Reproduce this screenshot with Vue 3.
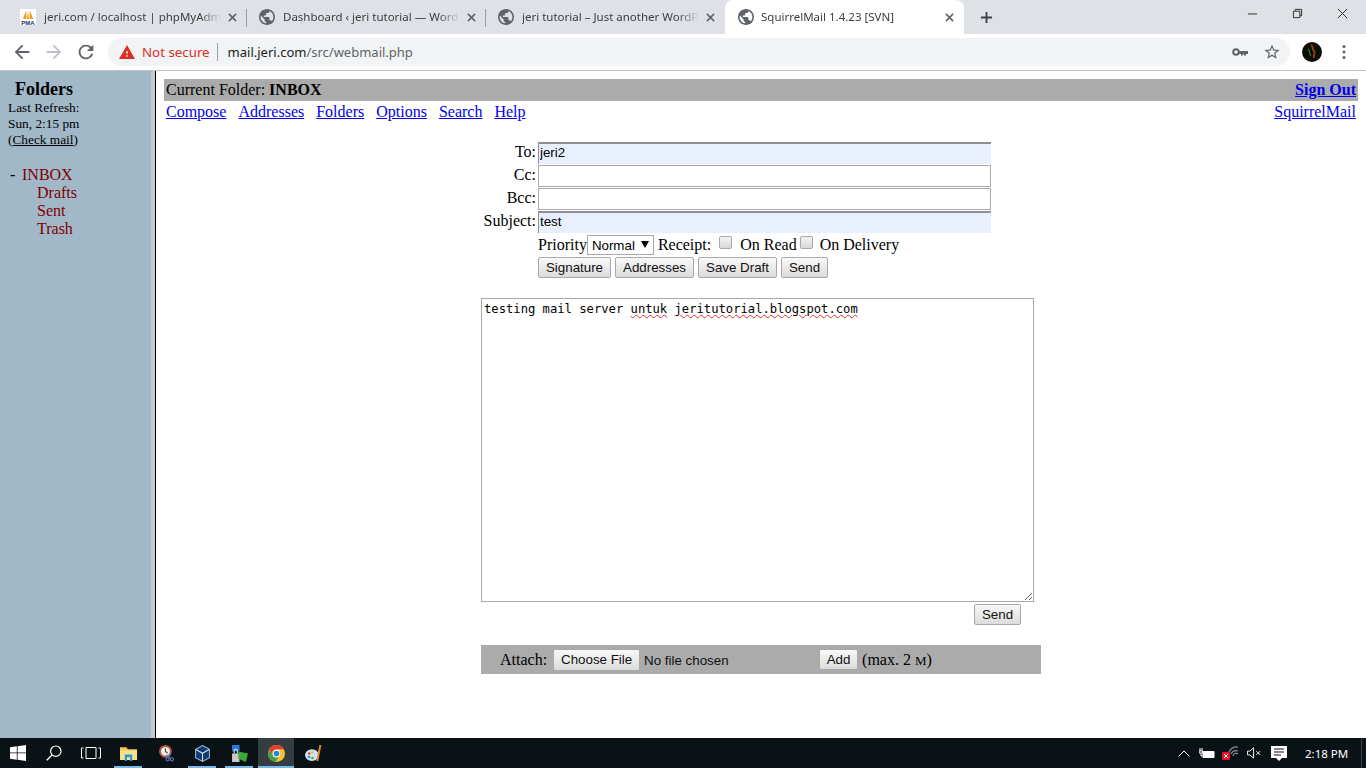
<script setup>
const tabs = [
  { title: 'jeri.com / localhost | phpMyAdmin', pma: true },
  { title: 'Dashboard ‹ jeri tutorial — WordPress' },
  { title: 'jeri tutorial – Just another WordPress site' },
  { title: 'SquirrelMail 1.4.23 [SVN]', active: true }
]
const navLinks = ['Compose', 'Addresses', 'Folders', 'Options', 'Search', 'Help']
const fields = [
  { label: 'To:', value: 'jeri2', filled: true },
  { label: 'Cc:', value: '' },
  { label: 'Bcc:', value: '' },
  { label: 'Subject:', value: 'test', filled: true }
]
const folders = ['Drafts', 'Sent', 'Trash']
const actions = [
  { text: 'Signature', w: 73 },
  { text: 'Addresses', w: 79 },
  { text: 'Save Draft', w: 79 },
  { text: 'Send', w: 47 }
]
const globe = 'M12 2C6.48 2 2 6.48 2 12s4.48 10 10 10 10-4.48 10-10S17.52 2 12 2zm-1 17.93c-3.95-.49-7-3.85-7-7.93 0-.62.08-1.21.21-1.79L9 15v1c0 1.1.9 2 2 2v1.93zm6.9-2.54c-.26-.81-1-1.39-1.9-1.39h-1v-3c0-.55-.45-1-1-1H8v-2h2c.55 0 1-.45 1-1V7h2c1.1 0 2-.9 2-2v-.41c2.93 1.19 5 4.06 5 7.41 0 2.08-.8 3.97-2.1 5.39z'
</script>

<template>
  <div class="screen">
    <header class="tabstrip">
      <div v-for="(t, i) in tabs" :key="i" class="tab" :class="{ active: t.active, sep: i < 2 }">
        <svg v-if="t.pma" class="fav" viewBox="0 0 16 16">
          <rect width="16" height="16" fill="#fff" />
          <path d="M3 10 6 1.5 6.6 10zM7 10 8 1 9 10zM9.6 10 10 1.5 13 10z" fill="#f59a12" />
          <text x="8" y="15.5" text-anchor="middle" font-size="6" font-weight="700" font-family="Liberation Sans, sans-serif" fill="#1c2f6b">PMA</text>
        </svg>
        <svg v-else class="fav" viewBox="2 2 20 20"><path :d="globe" fill="#5f6368" /></svg>
        <span class="tab-title">{{ t.title }}</span>
        <svg class="tab-x" viewBox="0 0 10 10"><path d="M1 1 9 9M9 1 1 9" stroke="#5f6368" stroke-width="1.7" /></svg>
      </div>
      <svg class="plus" viewBox="0 0 14 14"><path d="M7 1v12M1 7h12" stroke="#3c4043" stroke-width="2" /></svg>
      <div class="win-ctrls">
        <svg viewBox="0 0 12 12"><path d="M1 6.5h10" stroke="#222" /></svg>
        <svg viewBox="0 0 12 12"><path d="M3.5 3V1.5h7v7H8.5M1.5 3.5h7v7h-7z" fill="none" stroke="#222" /></svg>
        <svg viewBox="0 0 12 12"><path d="M1 1l10 10M11 1 1 11" stroke="#222" /></svg>
      </div>
    </header>

    <div class="toolbar">
      <svg class="tool" viewBox="0 0 24 24"><path d="M20 11H7.83l5.59-5.59L12 4l-8 8 8 8 1.41-1.41L7.83 13H20v-2z" fill="#5f6368" /></svg>
      <svg class="tool" viewBox="0 0 24 24"><path d="M4 11h12.17l-5.59-5.59L12 4l8 8-8 8-1.41-1.41L16.17 13H4v-2z" fill="#bdc1c6" /></svg>
      <svg class="tool" viewBox="0 0 24 24"><path d="M17.65 6.35A7.958 7.958 0 0012 4c-4.42 0-7.99 3.58-7.99 8s3.57 8 7.99 8c3.73 0 6.84-2.55 7.73-6h-2.08A5.99 5.99 0 0112 18c-3.31 0-6-2.69-6-6s2.69-6 6-6c1.66 0 3.14.69 4.22 1.78L13 11h7V4l-2.35 2.35z" fill="#5f6368" /></svg>
      <div class="omnibox">
        <svg class="warn" viewBox="1 2 22 19"><path d="M1 21h22L12 2 1 21zm12-3h-2v-2h2v2zm0-4h-2v-4h2v4z" fill="#d93025" /></svg>
        <span class="not-secure">Not secure</span>
        <i class="omni-sep"></i>
        <span class="url"><b>mail.jeri.com</b>/src/webmail.php</span>
        <svg class="key" viewBox="0 0 16 10"><circle cx="4" cy="5" r="2.8" fill="none" stroke="#5f6368" stroke-width="2" /><path d="M7 4h9v3h-2v1.5h-2V7h-1v1.500H9V7H7z" fill="#5f6368" /></svg>
        <svg class="star" viewBox="0 0 24 24"><path d="M22 9.24l-7.19-.62L12 2 9.19 8.63 2 9.24l5.46 4.730L5.820 21 12 17.270 18.180 21l-1.630-7.030L22 9.240zM12 15.400l-3.760 2.270 1-4.280-3.320-2.880 4.380-.38L12 6.100l1.710 4.040 4.380.38-3.320 2.880 1 4.280L12 15.400z" fill="#5f6368" /></svg>
      </div>
      <svg class="avatar" viewBox="0 0 20 20">
        <circle cx="10" cy="10" r="10" fill="#0c0d08" />
        <path d="M9 3c3 2 1 4 3 6s-1 4 0 7" fill="none" stroke="#8c4218" stroke-width="2" />
        <path d="M6 7c2 1 1 5 3 7" fill="none" stroke="#2f6a25" stroke-width="1.500" />
      </svg>
      <svg class="dots" viewBox="0 0 4 16"><circle cx="2" cy="2.500" r="1.500" /><circle cx="2" cy="8" r="1.500" /><circle cx="2" cy="13.500" r="1.500" /></svg>
    </div>

    <div class="page">
      <aside class="sidebar">
        <div class="side-title">Folders</div>
        <div class="side-info">
          <div>Last Refresh:</div>
          <div>Sun, 2:15 pm</div>
          <div>(<a class="check">Check mail</a>)</div>
        </div>
        <div class="inbox"><span class="dash">-</span><a>INBOX</a></div>
        <a v-for="f in folders" :key="f" class="folder">{{ f }}</a>
      </aside>

      <main class="main">
        <div class="topbar">
          <span>Current Folder: <b>INBOX</b></span>
          <a class="link signout">Sign Out</a>
        </div>
        <nav class="nav">
          <a v-for="n in navLinks" :key="n" class="link">{{ n }}</a>
          <a class="link brand">SquirrelMail</a>
        </nav>

        <section class="compose">
          <div class="fields">
            <template v-for="f in fields" :key="f.label">
              <label class="f-label">{{ f.label }}</label>
              <input class="f-input" :class="{ filled: f.filled }" :value="f.value" />
            </template>
          </div>

          <div class="options">
            <span>Priority</span>
            <div class="select-wrap">
              <select class="select"><option>Normal</option></select>
              <svg class="select-arrow" viewBox="0 0 8 7"><path d="M0 0h8L4 7z" /></svg>
            </div>
            <span class="receipt">Receipt:</span>
            <input class="check-box first" type="checkbox" />
            <span class="on-read">On Read</span>
            <input class="check-box second" type="checkbox" />
            <span class="on-delivery">On Delivery</span>
          </div>

          <div class="actions">
            <button v-for="a in actions" :key="a.text" class="btn" :style="{ width: a.w + 'px' }">{{ a.text }}</button>
          </div>

          <div class="body-box">testing mail server <span class="squiggle">untuk</span> <span class="squiggle">jeritutorial.blogspot.com</span></div>

          <div class="send-row"><button class="btn send">Send</button></div>

          <div class="attach">
            <span class="attach-label">Attach:</span>
            <input class="file" type="file" />
            <button class="btn add">Add</button>
            <span class="max">(max. 2 <small>M</small>)</span>
          </div>
        </section>
      </main>
    </div>

    <footer class="taskbar">
      <div class="slot start">
        <svg class="ico" viewBox="0 0 16 16"><path d="M0 2.300 6.800 1.300V7.500H0zM7.600 1.200 16 0V7.500H7.600zM0 8.300H6.800V14.700L0 13.700zM7.600 8.300H16V16L7.600 14.800z" fill="#fff" /></svg>
      </div>
      <div class="slot">
        <svg class="ico" viewBox="0 0 16 16"><circle cx="9.800" cy="6.200" r="5.200" fill="none" stroke="#fff" stroke-width="1.200" /><path d="M6 10 .8 15.300" stroke="#fff" stroke-width="1.300" /></svg>
      </div>
      <div class="slot">
        <svg class="ico wide" viewBox="0 0 20 12"><path d="M5 .500h10v11H5zM2.500 1H.5v10h2M17.500 1h2v10h-2" fill="none" stroke="#fff" /></svg>
      </div>
      <div class="slot apps run">
        <svg class="ico" viewBox="0 0 16 14"><path d="M0 1h6l1.500 2H16v10H0z" fill="#f5c64e" /><path d="M0 4h16v9H0z" fill="#fbe08c" /><path d="M4.500 8h7v6h-2V10.500h-3V14h-2z" fill="#2a9ad6" /></svg>
      </div>
      <div class="slot apps">
        <svg class="ico" viewBox="0 0 16 16"><circle cx="7" cy="6" r="6" fill="#b5513f" /><circle cx="7" cy="6" r="4.200" fill="#eee" /><path d="M7 3v3l2 1.500" stroke="#444" fill="none" /><path d="M8 9l3 3M12 8l-3 4" stroke="#5b7fc0" /><circle cx="9" cy="13.500" r="1.500" fill="none" stroke="#5b7fc0" /><circle cx="13" cy="13.500" r="1.500" fill="none" stroke="#5b7fc0" /></svg>
      </div>
      <div class="slot apps run tight">
        <svg class="ico" viewBox="0 0 16 16"><path d="M8 .500 14.500 4v8L8 15.500 1.500 12V4z" fill="#123a6b" stroke="#8fb4dc" /><path d="M1.800 4.200 8 7.800l6.200-3.600M8 7.800V15" stroke="#cfe0f2" fill="none" /></svg>
      </div>
      <div class="slot apps run">
        <svg class="ico" viewBox="0 0 16 16"><path d="M1 0h7v6H1z" fill="#2b79d8" /><path d="M1 8h7v8H1z" fill="#c9c9c9" /><path d="M3 8V5.500a1.500 1.500 0 0 1 3 0V8" fill="none" stroke="#ddd" /><path d="M7 6l9 2-2 8-7-3z" fill="#3aa83a" /></svg>
      </div>
      <div class="slot apps run active">
        <svg class="ico" viewBox="0 0 16 16">
          <circle cx="8" cy="8" r="8" fill="#fbc02d" />
          <path d="M8 0a8 8 0 0 0-6.900 4l3.400 6A4 4 0 0 1 8 4h7a8 8 0 0 0-7-4z" fill="#e53935" />
          <path d="M1.100 4A8 8 0 0 0 7 15.900L10.500 11A4 4 0 0 1 4.500 10z" fill="#43a047" />
          <circle cx="8" cy="8" r="3.500" fill="#fff" /><circle cx="8" cy="8" r="2.700" fill="#1e88e5" />
        </svg>
      </div>
      <div class="slot apps">
        <svg class="ico" viewBox="0 0 16 16"><ellipse cx="6.500" cy="9.500" rx="6.500" ry="5.500" fill="#cfe3ef" /><circle cx="4" cy="8" r="1.200" fill="#e0483e" /><circle cx="7" cy="6.800" r="1.200" fill="#f2c230" /><circle cx="3.800" cy="11.300" r="1.200" fill="#3a8edb" /><circle cx="7" cy="12.300" r="1.200" fill="#3cae4a" /><path d="M14.500 0 11.500 15" stroke="#e8862e" stroke-width="1.800" /></svg>
      </div>

      <div class="tray">
        <svg class="t chevron" viewBox="0 0 12 7"><path d="M.5 6.500 6 1l5.500 5.500" fill="none" stroke="#fff" /></svg>
        <svg class="t batt" viewBox="0 0 16 11"><path d="M4 3.500h11v6H4z" fill="#fff" stroke="#fff" /><path d="M1 0v3M3 0v3M0 3h4v2H0zM2 5v3h2" stroke="#fff" fill="none" /></svg>
        <svg class="t net" viewBox="0 0 16 14"><path d="M7 6a9 9 0 0 1 9-5M9 8a6 6 0 0 1 7-3M11 10a3 3 0 0 1 5-2" fill="none" stroke="#8b8f91" stroke-width="1.200" /><rect x="0" y="6" width="8" height="8" rx="1" fill="#e81123" /><path d="M2 8l4 4M6 8l-4 4" stroke="#fff" /></svg>
        <svg class="t vol" viewBox="0 0 16 12"><path d="M.5 4H3l4-3.500v11L3 8H.5z" fill="none" stroke="#fff" /><path d="M10 4l4 4M14 4l-4 4" stroke="#fff" /></svg>
        <svg class="t note" viewBox="0 0 16 15"><path d="M0 0h16v12h-5l-3 3-3-3H0z" fill="#fff" /><path d="M3 3h10M3 6h10M3 9h7" stroke="#0a1216" /></svg>
        <span class="clock">2:18 PM</span>
        <i class="show-desk"></i>
      </div>
    </footer>
  </div>
</template>

<style>
html, body { margin: 0; overflow: hidden; }
</style>

<style scoped>
.screen {
  width: 1366px;
  height: 768px;
  display: flex;
  flex-direction: column;
  overflow: hidden;
  background: #fff;
  font-family: "Liberation Serif", serif;
  font-size: 16px;
  color: #000;
}

/* tab strip */
.tabstrip {
  height: 34px;
  flex: none;
  display: flex;
  padding-left: 8px;
  background: #dee1e6;
  font-family: "Noto Sans", sans-serif;
}
.tab {
  width: 239px;
  height: 34px;
  box-sizing: border-box;
  flex: none;
  display: flex;
  align-items: center;
  padding: 0 10px 0 12px;
  position: relative;
  color: #3c4043;
}
.tab.sep::after {
  content: "";
  position: absolute;
  right: 0;
  top: 9px;
  height: 18px;
  width: 1px;
  background: #9aa0a6;
}
.tab.active {
  background: #fff;
  border-radius: 8px 8px 0 0;
  padding-left: 13px;
}
.tab.active .tab-title { margin-left: 7px; }
.fav { width: 16px; height: 16px; flex: none; }
.tab-title {
  flex: 1;
  min-width: 0;
  margin-left: 8px;
  font-size: 11.5px;
  line-height: 16px;
  white-space: nowrap;
  overflow: hidden;
  -webkit-mask-image: linear-gradient(to right, #000 88%, transparent 100%);
  mask-image: linear-gradient(to right, #000 88%, transparent 100%);
}
.tab-x { width: 9px; height: 9px; flex: none; margin-left: 7px; }
.plus { width: 13px; height: 13px; flex: none; margin: 11px 0 0 16px; }
.win-ctrls {
  margin-left: auto;
  display: flex;
  gap: 34px;
  padding: 8px 18px 0 0;
}
.win-ctrls svg { width: 11px; height: 11px; }

/* toolbar */
.toolbar {
  height: 36px;
  flex: none;
  display: flex;
  align-items: center;
  background: #fff;
  padding-left: 11px;
  font-family: "Noto Sans", sans-serif;
}
.tool { width: 22px; height: 22px; flex: none; margin-right: 10px; }
.omnibox {
  width: 1182px;
  height: 28px;
  margin-left: 1px;
  box-sizing: border-box;
  flex: none;
  display: flex;
  align-items: center;
  padding: 0 8px 0 11px;
  border-radius: 14px;
  background: #f1f3f4;
  font-size: 13px;
}
.warn { width: 16px; height: 14px; flex: none; }
.not-secure { margin-left: 7px; color: #d93025; font-size: 13.3px; }
.omni-sep { width: 1px; height: 18px; margin: 0 10px 0 7px; background: #9aa0a6; }
.url { color: #5f6368; }
.url b { font-weight: 400; color: #202124; }
.key { width: 16px; height: 10px; margin-left: auto; }
.star { width: 18px; height: 18px; margin-left: 15px; margin-right: 1px; }
.avatar { width: 20px; height: 20px; flex: none; margin-left: 12px; }
.dots { width: 4px; height: 16px; flex: none; margin-left: 20px; fill: #5f6368; }

/* page */
.page {
  flex: 1;
  min-height: 0;
  display: flex;
  border-top: 1px solid #c4c4c4;
}
.sidebar {
  width: 151px;
  flex: none;
  box-sizing: content-box;
  background: #a0b8c8;
  border-right: 4px solid #c8c8c8;
  box-shadow: 1px 0 0 #000;
  display: flex;
  flex-direction: column;
  align-items: flex-start;
  margin-right: 1px;
}
.side-title {
  margin: 8px 0 0 15px;
  font-size: 18px;
  line-height: 20px;
  font-weight: 700;
}
.side-info {
  margin: 1px 0 0 8px;
  font-size: 13.33px;
  line-height: 16px;
}
.check { color: #000; text-decoration: underline; }
.inbox {
  margin: 18px 0 0 10px;
  line-height: 18px;
  display: flex;
}
.dash { width: 12px; }
.inbox a, .folder { color: #800000; }
.folder { margin-left: 37px; line-height: 18px; }

.main {
  flex: 1;
  min-width: 0;
  padding: 8px;
  display: flex;
  flex-direction: column;
  align-items: stretch;
}
.topbar {
  height: 22px;
  flex: none;
  display: flex;
  justify-content: space-between;
  align-items: center;
  padding: 0 2px;
  background: #ababab;
}
.link { color: #0000ee; text-decoration: underline; }
.signout { font-weight: 700; }
.nav {
  height: 22px;
  flex: none;
  display: flex;
  gap: 12px;
  align-items: center;
  padding: 0 2px;
}
.brand { margin-left: auto; }

.compose {
  width: 560px;
  align-self: center;
  margin-top: 19px;
  display: flex;
  flex-direction: column;
}
.fields {
  display: grid;
  grid-template-columns: 57px 453px;
  grid-auto-rows: 23px;
}
.f-label {
  padding-right: 2px;
  text-align: right;
  line-height: 19px;
}
.f-input {
  width: 453px;
  height: 21.5px;
  box-sizing: border-box;
  margin: 0;
  padding: 0 1px;
  border: 1px solid #a9a9a9;
  outline: none;
  background: #fff;
  font: 13.33px "Liberation Sans", sans-serif;
  color: #000;
}
.f-input.filled {
  background: #e8f0fe;
  border-width: 2px 0 0 1px;
  border-color: #8f8f8f;
  padding-bottom: 3px;
}
.options {
  height: 22px;
  margin: 0 0 1px 57px;
  display: flex;
  align-items: center;
  white-space: nowrap;
  line-height: 18px;
}
.select-wrap { position: relative; margin-left: 0; display: flex; }
.select {
  width: 67px;
  height: 20px;
  box-sizing: border-box;
  margin: 0;
  padding: 0 0 0 4px;
  appearance: none;
  -webkit-appearance: none;
  border: 1px solid #a9a9a9;
  border-radius: 0;
  background: #fff;
  font: 13.33px "Liberation Sans", sans-serif;
  color: #000;
}
.select-arrow {
  position: absolute;
  right: 5px;
  top: 6px;
  width: 8px;
  height: 7px;
}
.receipt { margin-left: 4px; }
.check-box {
  width: 13px;
  height: 13px;
  margin: -6px 0 0;
  appearance: none;
  -webkit-appearance: none;
  box-sizing: border-box;
  border: 1px solid #a9a9a9;
  border-radius: 2px;
  background: linear-gradient(#f2f2f2, #d8d8d8);
}
.check-box.first { margin-left: 8px; }
.on-read { margin-left: 8px; }
.check-box.second { margin-left: 3px; }
.on-delivery { margin-left: 7px; }
.actions {
  margin-left: 57px;
  display: flex;
  gap: 4px;
}
.btn {
  height: 21px;
  box-sizing: border-box;
  margin: 0;
  padding: 0;
  border: 1px solid #a9a9a9;
  border-radius: 2px;
  background: linear-gradient(#f8f8f8, #dcdcdc);
  font: 13.33px "Liberation Sans", sans-serif;
  color: #111;
}
.body-box {
  width: 553px;
  height: 304px;
  box-sizing: border-box;
  margin-top: 20px;
  padding: 3px 2px;
  border: 1px solid #a9a9a9;
  overflow: auto;
  resize: both;
  font: 12.18px/14px "DejaVu Sans Mono", monospace;
  color: #000;
}
.squiggle {
  text-decoration: underline wavy #e0322a 1px;
  text-underline-offset: 1px;
}
.send-row {
  display: flex;
  justify-content: flex-end;
  margin-top: 2px;
  padding-right: 20px;
}
.send { width: 47px; }
.attach {
  height: 29px;
  margin-top: 20px;
  background: #ababab;
  display: flex;
  align-items: center;
  white-space: nowrap;
}
.attach-label { margin-left: 19px; }
.file {
  width: 266px;
  height: 22px;
  margin: 0 0 0 6px;
  padding: 0;
  font: 13.33px "Liberation Sans", sans-serif;
  color: #111;
}
.file::file-selector-button {
  width: 87px;
  height: 22px;
  margin: 0 4px 0 0;
  padding: 0;
  border: 1px solid #a9a9a9;
  border-radius: 2px;
  background: linear-gradient(#f8f8f8, #dcdcdc);
  font: inherit;
  color: #111;
}
.add { width: 39px; height: 21px; }
.max { margin-left: 4px; }
.max small { font-size: 13px; }

/* taskbar */
.taskbar {
  height: 30px;
  flex: none;
  display: flex;
  background: #0a1216;
  font-family: "Noto Sans", sans-serif;
}
.slot {
  width: 36px;
  height: 30px;
  flex: none;
  display: flex;
  align-items: center;
  justify-content: center;
  box-sizing: border-box;
}
.slot:nth-child(3) { width: 38px; }
.slot:nth-child(5) { width: 40px; }
.slot:nth-child(6) { width: 32px; }
.slot:nth-child(7) { margin-left: 3px; }
.slot:nth-child(8) { margin-left: 1px; }
.slot:nth-child(9) { width: 38px; }
.ico { width: 16px; height: 16px; }
.apps .ico { width: 17px; height: 17px; }
.ico.wide { width: 20px; height: 12px; }
.slot.run { position: relative; }
.slot.run::after {
  content: "";
  position: absolute;
  left: 4px;
  right: 4px;
  bottom: 0;
  height: 2px;
  background: #76b9ed;
}
.slot.tight::after { left: 2px; right: 2px; }
.slot.active { background: #363d40; }
.slot.active::after { left: 0; right: 0; }
.tray {
  margin-left: auto;
  display: flex;
  align-items: center;
  color: #fff;
}
.t { flex: none; }
.chevron { width: 12px; height: 7px; margin-right: 9px; }
.batt { width: 16px; height: 11px; margin-right: 7px; }
.net { width: 16px; height: 14px; margin-right: 9px; }
.vol { width: 15px; height: 12px; margin-right: 9px; }
.note { width: 16px; height: 15px; margin-right: 18px; }
.clock { font-size: 11.5px; width: 46px; white-space: nowrap; }
.show-desk { width: 1px; height: 30px; margin: 0 4px 0 10px; background: #3c4347; }
</style>
